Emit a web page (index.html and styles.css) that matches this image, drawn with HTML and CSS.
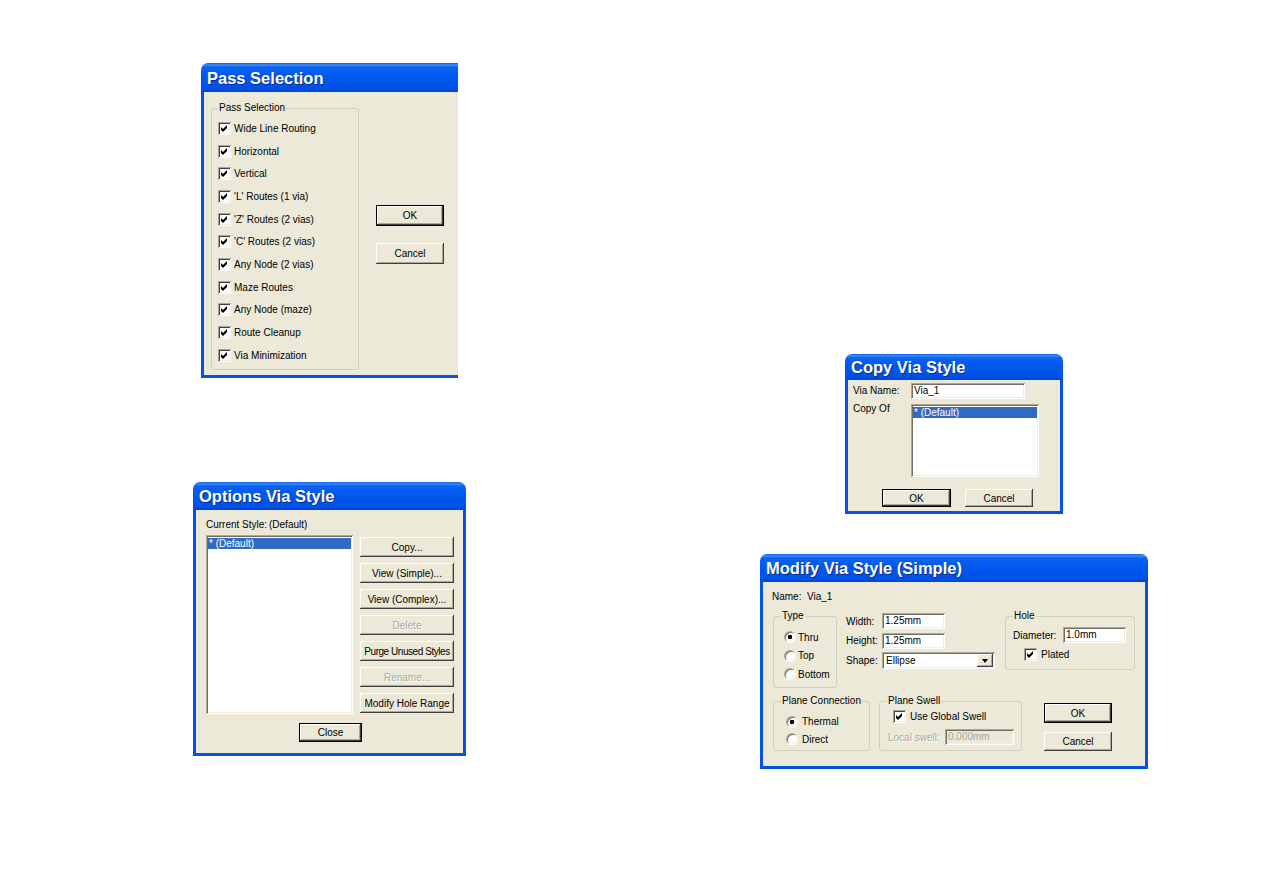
FILE: index.html
```html
<!DOCTYPE html>
<html lang="en">
<head>
  <meta charset="UTF-8" />
  <title>Via Style Dialogs</title>
  <link rel="stylesheet" href="styles.css">
</head>
<body>
<div class="desk">

  <!-- Pass Selection -->
  <div class="win pass">
    <div class="title">Pass Selection</div>
    <div class="body pass-body">
      <fieldset class="group pass-group">
        <legend>Pass Selection</legend>
        <div class="check"><span class="cb"><svg viewBox="0 0 13 13"><path d="M3 5l2 2 4-4v3l-4 4-2-2z"/></svg></span>Wide Line Routing</div>
        <div class="check"><span class="cb"><svg viewBox="0 0 13 13"><path d="M3 5l2 2 4-4v3l-4 4-2-2z"/></svg></span>Horizontal</div>
        <div class="check"><span class="cb"><svg viewBox="0 0 13 13"><path d="M3 5l2 2 4-4v3l-4 4-2-2z"/></svg></span>Vertical</div>
        <div class="check"><span class="cb"><svg viewBox="0 0 13 13"><path d="M3 5l2 2 4-4v3l-4 4-2-2z"/></svg></span>'L' Routes (1 via)</div>
        <div class="check"><span class="cb"><svg viewBox="0 0 13 13"><path d="M3 5l2 2 4-4v3l-4 4-2-2z"/></svg></span>'Z' Routes (2 vias)</div>
        <div class="check"><span class="cb"><svg viewBox="0 0 13 13"><path d="M3 5l2 2 4-4v3l-4 4-2-2z"/></svg></span>'C' Routes (2 vias)</div>
        <div class="check"><span class="cb"><svg viewBox="0 0 13 13"><path d="M3 5l2 2 4-4v3l-4 4-2-2z"/></svg></span>Any Node (2 vias)</div>
        <div class="check"><span class="cb"><svg viewBox="0 0 13 13"><path d="M3 5l2 2 4-4v3l-4 4-2-2z"/></svg></span>Maze Routes</div>
        <div class="check"><span class="cb"><svg viewBox="0 0 13 13"><path d="M3 5l2 2 4-4v3l-4 4-2-2z"/></svg></span>Any Node (maze)</div>
        <div class="check"><span class="cb"><svg viewBox="0 0 13 13"><path d="M3 5l2 2 4-4v3l-4 4-2-2z"/></svg></span>Route Cleanup</div>
        <div class="check"><span class="cb"><svg viewBox="0 0 13 13"><path d="M3 5l2 2 4-4v3l-4 4-2-2z"/></svg></span>Via Minimization</div>
      </fieldset>
      <div class="pass-btns">
        <button class="btn def">OK</button>
        <button class="btn">Cancel</button>
      </div>
    </div>
  </div>

  <!-- Options Via Style -->
  <div class="win opt">
    <div class="title">Options Via Style</div>
    <div class="body opt-body">
      <div class="cur"><span>Current Style:</span><span>(Default)</span></div>
      <div class="opt-main">
        <div class="list opt-list">
          <div class="sel">* (Default)</div>
        </div>
        <div class="opt-btns">
          <button class="btn">Copy...</button>
          <button class="btn">View (Simple)...</button>
          <button class="btn">View (Complex)...</button>
          <button class="btn off">Delete</button>
          <button class="btn tight">Purge Unused Styles</button>
          <button class="btn off">Rename...</button>
          <button class="btn">Modify Hole Range</button>
        </div>
      </div>
      <button class="btn def opt-close">Close</button>
    </div>
  </div>

  <!-- Copy Via Style -->
  <div class="win copy">
    <div class="title">Copy Via Style</div>
    <div class="body copy-body">
      <div class="copy-grid">
        <span class="lbl">Via Name:</span>
        <div class="field copy-name">Via_1</div>
        <span class="lbl copy-of">Copy Of</span>
        <div class="list copy-list">
          <div class="sel">* (Default)</div>
        </div>
      </div>
      <div class="copy-btns">
        <button class="btn def">OK</button>
        <button class="btn">Cancel</button>
      </div>
    </div>
  </div>

  <!-- Modify Via Style (Simple) -->
  <div class="win mod">
    <div class="title">Modify Via Style (Simple)</div>
    <div class="body mod-body">
      <div class="mod-name"><span>Name:</span><span>Via_1</span></div>

      <div class="mod-row">
        <fieldset class="group type-group">
          <legend>Type</legend>
          <div class="radio"><span class="rb on"></span>Thru</div>
          <div class="radio"><span class="rb"></span>Top</div>
          <div class="radio"><span class="rb"></span>Bottom</div>
        </fieldset>

        <div class="mod-fields">
          <span>Width:</span>
          <div class="field w63">1.25mm</div>
          <span>Height:</span>
          <div class="field w63">1.25mm</div>
          <span>Shape:</span>
          <div class="combo">
            <span>Ellipse</span>
            <span class="drop"><span class="tri"></span></span>
          </div>
        </div>

        <fieldset class="group hole-group">
          <legend>Hole</legend>
          <div class="hole-row">
            <span>Diameter:</span>
            <div class="field">1.0mm</div>
          </div>
          <div class="check plated"><span class="cb"><svg viewBox="0 0 13 13"><path d="M3 5l2 2 4-4v3l-4 4-2-2z"/></svg></span>Plated</div>
        </fieldset>
      </div>

      <div class="mod-row row2">
        <fieldset class="group conn-group">
          <legend>Plane Connection</legend>
          <div class="radio"><span class="rb on"></span>Thermal</div>
          <div class="radio"><span class="rb"></span>Direct</div>
        </fieldset>

        <fieldset class="group swell-group">
          <legend>Plane Swell</legend>
          <div class="check global"><span class="cb"><svg viewBox="0 0 13 13"><path d="M3 5l2 2 4-4v3l-4 4-2-2z"/></svg></span>Use Global Swell</div>
          <div class="local">
            <span class="dim">Local swell:</span>
            <div class="field dis">0.000mm</div>
          </div>
        </fieldset>

        <div class="mod-btns">
          <button class="btn def">OK</button>
          <button class="btn">Cancel</button>
        </div>
      </div>
    </div>
  </div>

</div>
</body>
</html>
```

FILE: styles.css
```css
* {
  box-sizing: border-box;
}

body {
  margin: 0;
  background: #fff;
  font-family: "Liberation Sans", Arial, sans-serif;
  font-size: 10px;
  color: #000;
}

.desk {
  position: relative;
  width: 1263px;
  height: 893px;
}

/* window frame */
.win {
  position: absolute;
  display: flex;
  flex-direction: column;
}

.title {
  flex: none;
  display: flex;
  align-items: center;
  padding: 1px 0 0 6px;
  border-radius: 7px 7px 0 0;
  background: linear-gradient(to bottom, #0a5fe8 0%, #3d8ef8 7%, #0d62f0 14%, #0058ee 45%, #0052e6 85%, #0046d2 100%);
  color: #fff;
  font-weight: bold;
  font-size: 16.5px;
  white-space: nowrap;
  text-shadow: 1px 1px #0a2a86;
}

.body {
  flex: 1;
  background: #ece9d8;
  border: 3px solid #0553e6;
  border-top: 0;
}

.pass { left: 201px; top: 63px; width: 257px; height: 315px; }
.pass .title { height: 29px; border-top-right-radius: 0; }
.pass .body { border-right: 0; }

.opt { left: 193px; top: 482px; width: 273px; height: 274px; }
.opt .title { height: 28px; }

.copy { left: 845px; top: 354px; width: 218px; height: 160px; }
.copy .title { height: 26px; }

.mod { left: 760px; top: 554px; width: 388px; height: 215px; }
.mod .title { height: 28px; }

/* common controls */
.group {
  margin: 0;
  padding: 3px 6px 2px;
  border: 1px solid #d0d0bf;
  border-radius: 3px;
  min-width: 0;
}

.group legend {
  padding: 0 1px;
  line-height: 12px;
}

.check {
  display: flex;
  align-items: center;
  gap: 3px;
  white-space: nowrap;
}

.cb {
  flex: none;
  width: 13px;
  height: 13px;
  background: #fff;
  box-shadow: inset 1px 1px #aca899, inset -1px -1px #fff, inset 2px 2px #404040, inset -2px -2px #f1efe2;
}

.cb svg {
  display: block;
  width: 13px;
  height: 13px;
  fill: #000;
}

.radio {
  display: flex;
  align-items: center;
  gap: 2px;
  white-space: nowrap;
}

.rb {
  flex: none;
  width: 12px;
  height: 12px;
  border-radius: 50%;
  border: 1px solid;
  border-color: #aca899 #fff #fff #aca899;
  background: #fff;
  box-shadow: inset 1px 1px #716f64, inset -1px -1px #f1efe2;
}

.rb.on {
  background: radial-gradient(circle, #000 0 2px, #fff 2.6px);
}

.btn {
  display: flex;
  align-items: center;
  justify-content: center;
  padding: 0;
  border: 0;
  background: #ece9d8;
  font: inherit;
  color: #000;
  white-space: nowrap;
  box-shadow: inset -1px -1px #404040, inset 1px 1px #fff, inset -2px -2px #aca899;
}

.btn.def {
  box-shadow: inset 0 0 0 1px #000, inset -2px -2px #404040, inset 2px 2px #fff, inset -3px -3px #aca899;
}

.btn.off {
  color: #aca899;
  text-shadow: 1px 1px #fff;
}

.btn.tight {
  letter-spacing: -0.45px;
}

.field,
.list,
.combo {
  background: #fff;
  box-shadow: inset 1px 1px #aca899, inset -1px -1px #fff, inset 2px 2px #716f64, inset -2px -2px #f1efe2;
}

.field {
  height: 16px;
  line-height: 16px;
  padding: 0 3px;
  white-space: nowrap;
}

.field.dis {
  background: #ece9d8;
  color: #aca899;
}

.dim {
  color: #aca899;
  text-shadow: 1px 1px #fff;
}

.list {
  padding: 3px 2px 2px;
}

.list .sel {
  height: 11px;
  line-height: 11px;
  padding-left: 1px;
  background: #316ac5;
  color: #fff;
}

/* pass selection */
.pass-body {
  display: flex;
  align-items: flex-start;
  padding: 10px 0 0 7px;
}

.pass-group {
  width: 148px;
}

.pass-group .check {
  height: 22.7px;
}

.pass-btns {
  display: flex;
  flex-direction: column;
  gap: 17px;
  margin: 103px 0 0 17px;
}

.pass-btns .btn {
  width: 68px;
  height: 21px;
}

/* options via style */
.opt-body {
  padding: 9px 0 0 10px;
}

.cur {
  display: flex;
  line-height: 12px;
}

.cur span:first-child {
  width: 63px;
}

.opt-main {
  display: flex;
  align-items: flex-start;
  margin-top: 4px;
}

.opt-list {
  width: 147px;
  height: 179px;
}

.opt-btns {
  display: flex;
  flex-direction: column;
  gap: 6px;
  margin: 2px 0 0 7px;
}

.opt-btns .btn {
  width: 94px;
  height: 20px;
}

.opt-close {
  margin: 9px 0 0 93px;
  width: 63px;
  height: 19px;
}

/* copy via style */
.copy-body {
  padding: 3px 0 0 5px;
}

.copy-grid {
  display: grid;
  grid-template-columns: 58px auto;
  row-gap: 5px;
  align-items: start;
}

.copy-grid .lbl {
  line-height: 16px;
}

.copy-grid .copy-of {
  margin-top: -3px;
}

.copy-name {
  width: 114px;
}

.copy-list {
  width: 128px;
  height: 73px;
}

.copy-btns {
  display: flex;
  gap: 14px;
  margin: 12px 0 0 29px;
}

.copy-btns .btn {
  width: 68px;
  height: 18px;
}

.copy-btns .btn.def {
  width: 69px;
}

/* modify via style */
.mod-body {
  padding: 9px 0 0 9px;
}

.mod-name {
  display: flex;
  line-height: 12px;
}

.mod-name span:first-child {
  width: 35px;
}

.mod-row {
  display: flex;
  align-items: flex-start;
  margin-top: 7px;
}

.type-group {
  margin-left: 1px;
  width: 64px;
  height: 78px;
  padding: 6px 6px 0 7px;
}

.type-group .radio {
  height: 18.5px;
  margin-left: 3px;
}

.mod-fields {
  display: grid;
  grid-template-columns: 36px auto;
  row-gap: 3.5px;
  align-items: center;
  margin: 3px 0 0 9px;
}

.w63 {
  width: 63px;
}

.combo {
  display: flex;
  justify-content: space-between;
  align-items: center;
  width: 113px;
  height: 17px;
  padding: 2px;
  line-height: 13px;
}

.combo > span:first-child {
  padding-left: 2px;
}

.drop {
  display: flex;
  align-items: center;
  justify-content: center;
  width: 16px;
  height: 13px;
  background: #ece9d8;
  box-shadow: inset -1px -1px #404040, inset 1px 1px #fff, inset -2px -2px #aca899;
}

.tri {
  width: 0;
  height: 0;
  border-left: 3.5px solid transparent;
  border-right: 3.5px solid transparent;
  border-top: 4px solid #000;
}

.hole-group {
  margin-left: 10px;
  width: 130px;
  height: 60px;
  padding: 5px 7px 0;
}

.hole-row {
  display: grid;
  grid-template-columns: 50px 63px;
  align-items: center;
}

.plated {
  gap: 4px;
  margin: 5px 0 0 11px;
}

.row2 {
  margin-top: 7px;
}

.conn-group {
  margin-left: 1px;
  width: 97px;
  height: 56px;
  padding: 6px 6px 0 7px;
}

.conn-group .radio {
  height: 17.6px;
  margin-left: 5px;
  gap: 4px;
}

.swell-group {
  margin-left: 9px;
  width: 143px;
  height: 56px;
  padding: 3px 7px 0;
}

.global {
  gap: 4px;
  margin-left: 6px;
}

.local {
  display: grid;
  grid-template-columns: 57px 69px;
  align-items: center;
  margin: 6px 0 0 1px;
}

.mod-btns {
  display: flex;
  flex-direction: column;
  gap: 9px;
  margin: 8px 0 0 22px;
}

.mod-btns .btn {
  width: 68px;
  height: 19px;
}

.mod-btns .btn.def {
  height: 20px;
}
```
